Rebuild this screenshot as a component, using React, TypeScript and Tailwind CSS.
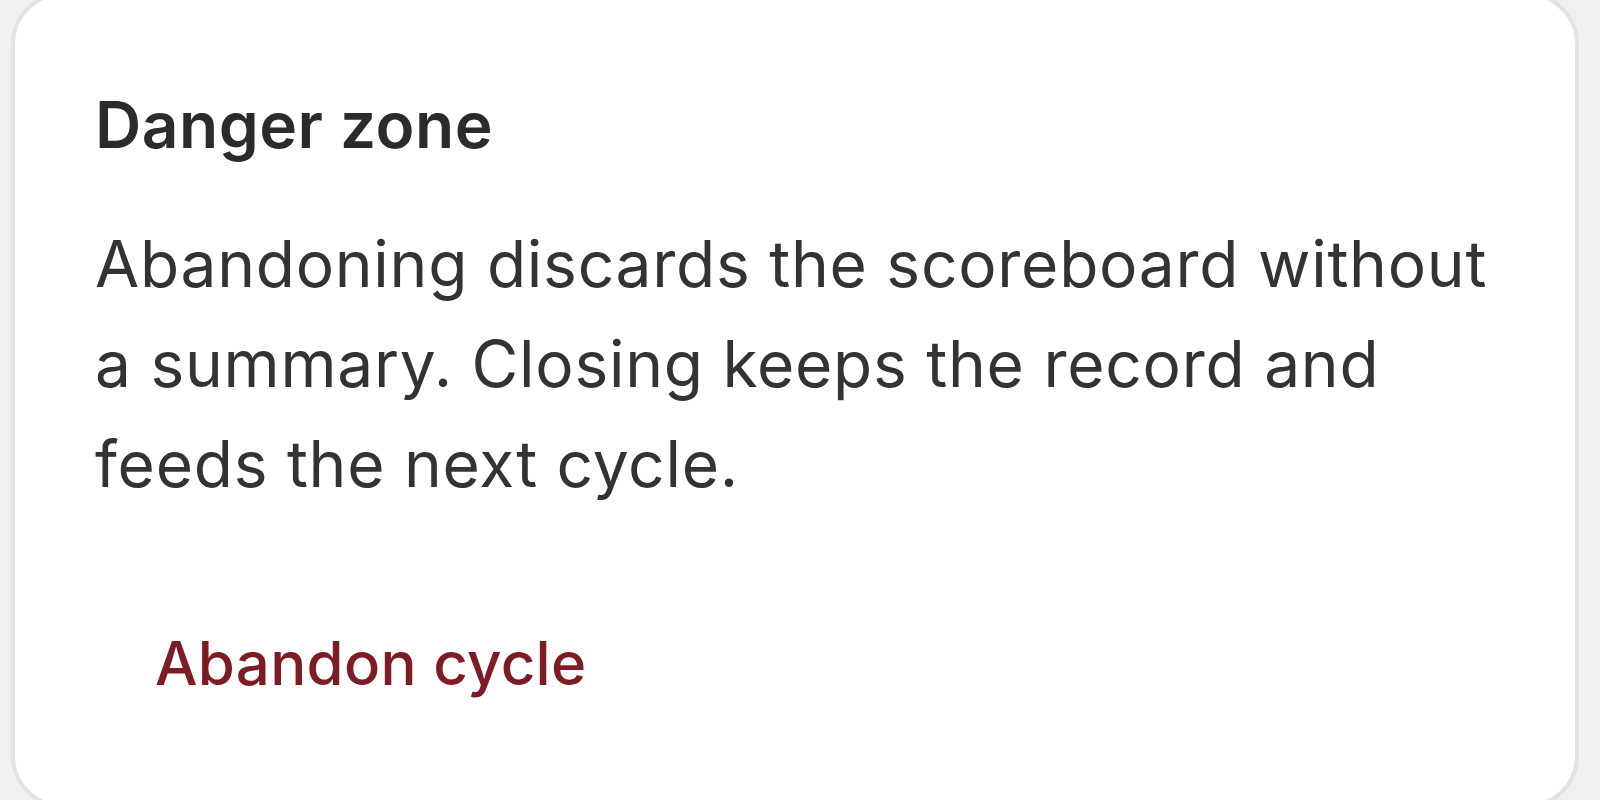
export default function App() {
  return (
    <div className="h-[800px] w-[1600px] overflow-hidden bg-[#f0f0f0]" style={{ fontFamily: 'Inter, "Noto Sans", sans-serif' }}>
      <div className="ml-[11px] mt-[-8px] h-[816px] w-[1568px] rounded-[52px] border-[4px] border-[#e3e3e3] bg-white px-[80px] pt-[84px]">
        <h2 className="text-[64px] font-semibold leading-[90px] tracking-[0.5px] text-[#2b2b2b]">Danger zone</h2>
        <p className="mt-[44px] text-[64px] leading-[100px] tracking-[0.75px] text-[#333333]">
          Abandoning discards the scoreboard without a summary. Closing keeps the record and feeds the next cycle.
        </p>
        <div className="mt-[77px]">
          <button className="pl-[60px] pr-[56px] py-[32px] text-[60px] font-medium leading-[80px] tracking-[0.3px] text-[#7d1c24]">Abandon cycle</button>
        </div>
      </div>
    </div>
  );
}
